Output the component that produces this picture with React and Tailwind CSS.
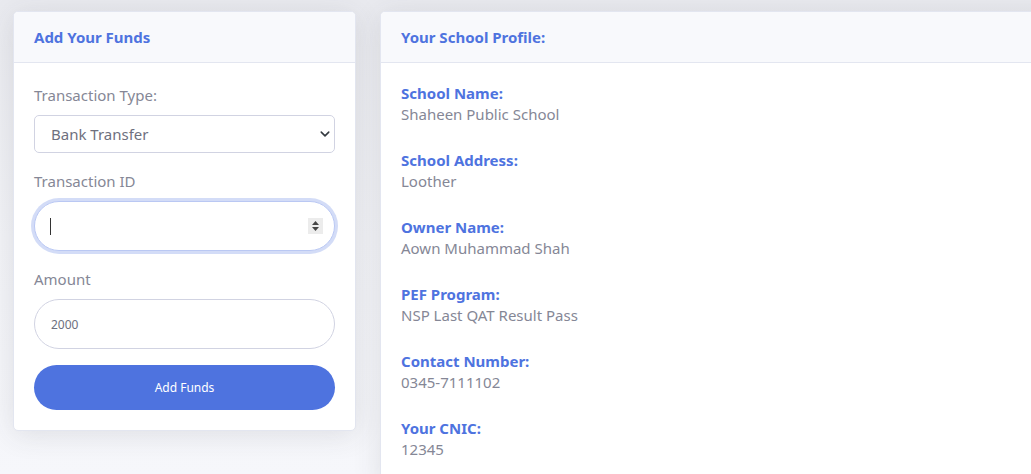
import React from 'react';

const profile = [
    { label: 'School Name:', value: 'Shaheen Public School' },
    { label: 'School Address:', value: 'Loother' },
    { label: 'Owner Name:', value: 'Aown Muhammad Shah' },
    { label: 'PEF Program:', value: 'NSP Last QAT Result Pass' },
    { label: 'Contact Number:', value: '0345-7111102' },
    { label: 'Your CNIC:', value: '12345' },
];

const App = () => {
    return (
        <div
            className="w-[1031px] h-[474px] overflow-hidden bg-gradient-to-b from-[#e9eaef] via-[#f2f3f7] to-[#f6f7fb]"
            style={{ fontFamily: '"Noto Sans", "Open Sans", sans-serif' }}
        >
            <div className="flex items-start gap-[24px] pt-[11px] pl-[13px]">
                {/* funds card */}
                <div className="w-[343px] shrink-0 bg-white rounded-[5px] border border-[#e3e6f0] shadow-[0_4px_28px_0_rgba(58,59,69,0.12)] overflow-hidden">
                    <div className="h-[51px] flex items-center px-5 bg-[#f8f9fc] border-b border-[#e3e6f0]">
                        <h6 className="text-[15px] font-bold text-[#4e73df]">Add Your Funds</h6>
                    </div>
                    <div className="p-5">
                        <div className="mb-4">
                            <label className="block text-[15px] leading-6 text-[#858796] mb-2">Transaction Type:</label>
                            <div className="relative">
                                <select className="w-full h-[38px] appearance-none rounded-[5px] border border-[#d1d3e2] bg-white pl-4 pr-8 text-[15px] text-[#6e707e] outline-none">
                                    <option>Bank Transfer</option>
                                </select>
                                <svg className="absolute right-[5px] top-[14px] pointer-events-none" width="10" height="10" viewBox="0 0 16 16">
                                    <path d="M2 5l6 6 6-6" fill="none" stroke="#343a40" strokeWidth="2.5" strokeLinecap="round" strokeLinejoin="round" />
                                </svg>
                            </div>
                        </div>
                        <div className="mb-4">
                            <label className="block text-[15px] leading-6 text-[#858796] mb-2">Transaction ID</label>
                            <div className="relative">
                                <div className="w-full h-[50px] rounded-full border border-[#bac8f3] bg-white shadow-[0_0_0_3px_rgba(78,115,223,0.25)]" />
                                <span className="absolute left-[16px] top-[17px] w-px h-[17px] bg-[#333]" />
                                <span className="absolute right-[12px] top-[17px] w-[15px] h-[16px] bg-[#ececec] flex items-center justify-center">
                                    <svg width="9" height="12" viewBox="0 0 9 12">
                                        <path d="M4.5 1L8 5H1z" fill="#444" />
                                        <path d="M4.5 11L8 7H1z" fill="#444" />
                                    </svg>
                                </span>
                            </div>
                        </div>
                        <div className="mb-4">
                            <label className="block text-[15px] leading-6 text-[#858796] mb-2">Amount</label>
                            <input
                                readOnly
                                value="2000"
                                className="w-full h-[50px] rounded-full border border-[#d1d3e2] bg-white px-4 text-[12px] text-[#6e707e] outline-none"
                            />
                        </div>
                        <button className="w-full h-[45px] rounded-full bg-[#4e73df] text-white text-[12px]">
                            Add Funds
                        </button>
                    </div>
                </div>

                {/* profile card */}
                <div className="w-[700px] shrink-0 h-[480px] bg-white rounded-[5px] border border-[#e3e6f0] shadow-[0_4px_28px_0_rgba(58,59,69,0.12)] overflow-hidden">
                    <div className="h-[51px] flex items-center px-5 bg-[#f8f9fc] border-b border-[#e3e6f0]">
                        <h6 className="text-[15px] font-bold text-[#4e73df]">Your School Profile:</h6>
                    </div>
                    <div className="px-5 pt-[20px]">
                        {profile.map((item) => (
                            <div key={item.label} className="mb-[25px]">
                                <div className="text-[15px] leading-[21px] font-bold text-[#4e73df]">{item.label}</div>
                                <div className="text-[15px] leading-[21px] text-[#858796]">{item.value}</div>
                            </div>
                        ))}
                    </div>
                </div>
            </div>
        </div>
    );
};

export default App;
